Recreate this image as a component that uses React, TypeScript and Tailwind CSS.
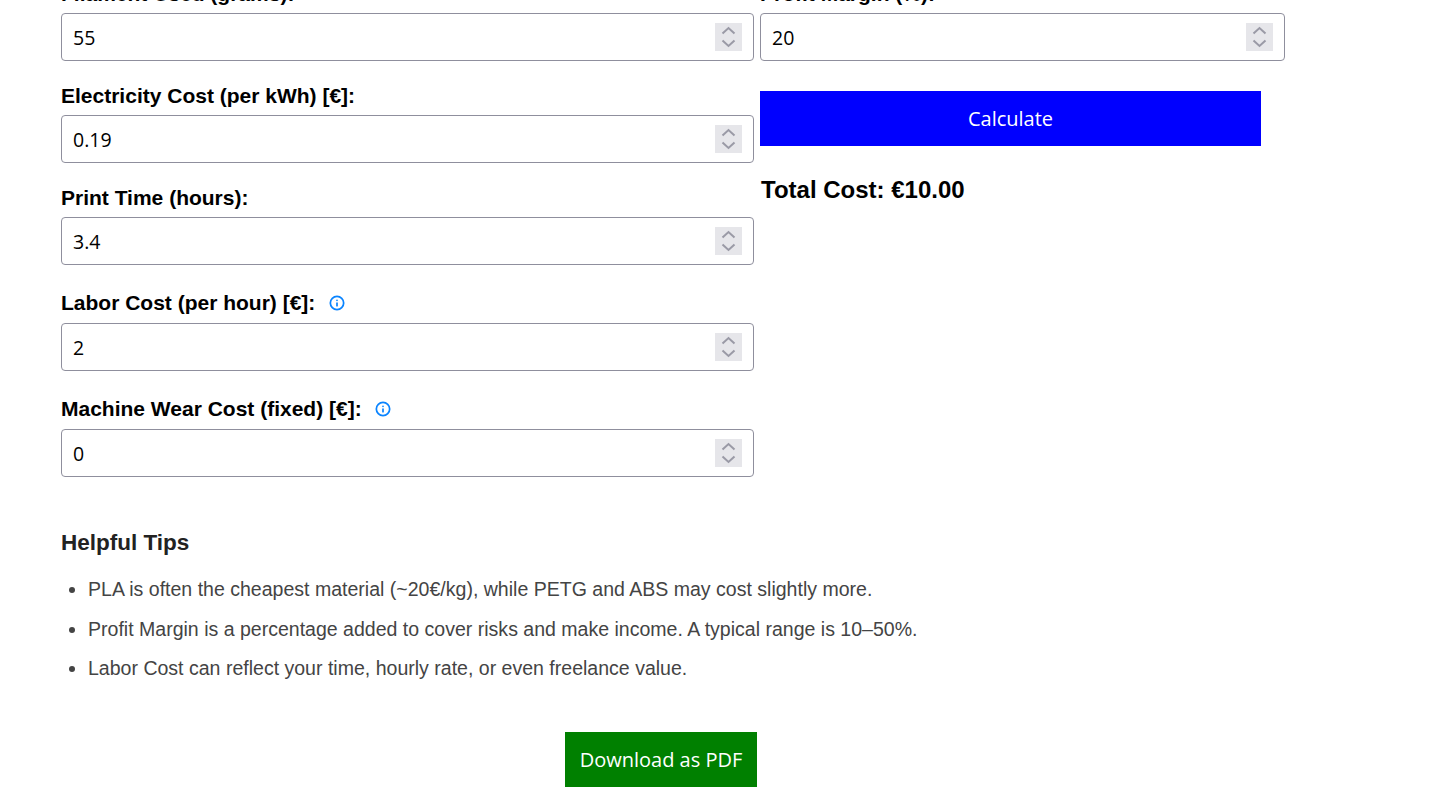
import { Info } from 'lucide-react';

const UI_FONT = "font-['Open_Sans',sans-serif]";

// Native number-input spinner look, always visible in the reference
function Spinner() {
  return (
    <div className="flex h-[28px] w-[27px] items-center justify-center bg-[#e6e6ea]">
      <svg width="15" height="22" viewBox="0 0 15 22" fill="none" stroke="#9a9aa6" strokeWidth="2">
        <path d="M1.5 7.5 L7.5 2 L13.5 7.5" />
        <path d="M1.5 14.5 L7.5 20 L13.5 14.5" />
      </svg>
    </div>
  );
}

function NumberBox({ value }: { value: string }) {
  return (
    <div className="flex h-[48px] w-full items-center justify-between rounded-[4px] border border-[#8f8f9d] bg-white pl-[11px] pr-[11px]">
      <span className={`${UI_FONT} pt-[1px] text-[19.5px] text-black`}>{value}</span>
      <Spinner />
    </div>
  );
}

function Field({ label, value, info }: { label: string; value: string; info?: boolean }) {
  return (
    <div className="mb-[23px]">
      <div className={`mb-[8px] flex items-center text-[21px] font-bold text-black ${info ? 'h-[27px] pt-[2px]' : 'h-[23px]'}`}>
        <span>{label}</span>
        {info && <Info className="ml-[13.6px] h-4 w-4 text-[#0a84ff]" strokeWidth={2.6} />}
      </div>
      <NumberBox value={value} />
    </div>
  );
}

const tips = [
  'PLA is often the cheapest material (~20€/kg), while PETG and ABS may cost slightly more.',
  'Profit Margin is a percentage added to cover risks and make income. A typical range is 10–50%.',
  'Labor Cost can reflect your time, hourly rate, or even freelance value.',
];

export default function App() {
  return (
    <div className="h-[808px] overflow-hidden bg-white font-['Liberation_Sans',sans-serif]">
      <div className="-mt-[18px] pl-[61px]">
        <div className="flex gap-[6px]">
          <div className="w-[693px]">
            <Field label="Filament Used (grams):" value="55" />
            <Field label="Electricity Cost (per kWh) [€]:" value="0.19" />
            <Field label="Print Time (hours):" value="3.4" />
            <Field label="Labor Cost (per hour) [€]:" value="2" info />
            <Field label="Machine Wear Cost (fixed) [€]:" value="0" info />
          </div>
          <div className="w-[525px]">
            <Field label="Profit Margin (%):" value="20" />
            <button className={`${UI_FONT} mt-[30px] block h-[55px] w-[501px] bg-[#0000ff] text-[20px] text-white`}>
              Calculate
            </button>
            <div className="ml-px mt-[30px] text-[24px] font-bold leading-[28px] text-black">Total Cost: €10.00</div>
          </div>
        </div>

        <h3 className="mt-[30px] text-[22.5px] font-bold leading-[26px] text-[#222]">Helpful Tips</h3>
        <ul className="mt-[20px] list-disc pl-[27px] text-[19.55px] leading-[27px] text-[#444]">
          {tips.map((tip) => (
            <li key={tip} className="mb-[12.5px]">
              {tip}
            </li>
          ))}
        </ul>

        <div className="mt-[50px] w-[1200px] pl-[504px]">
          <button className={`${UI_FONT} h-[55px] w-[192px] bg-[#008000] text-[20px] text-white`}>
            Download as PDF
          </button>
        </div>
      </div>
    </div>
  );
}
